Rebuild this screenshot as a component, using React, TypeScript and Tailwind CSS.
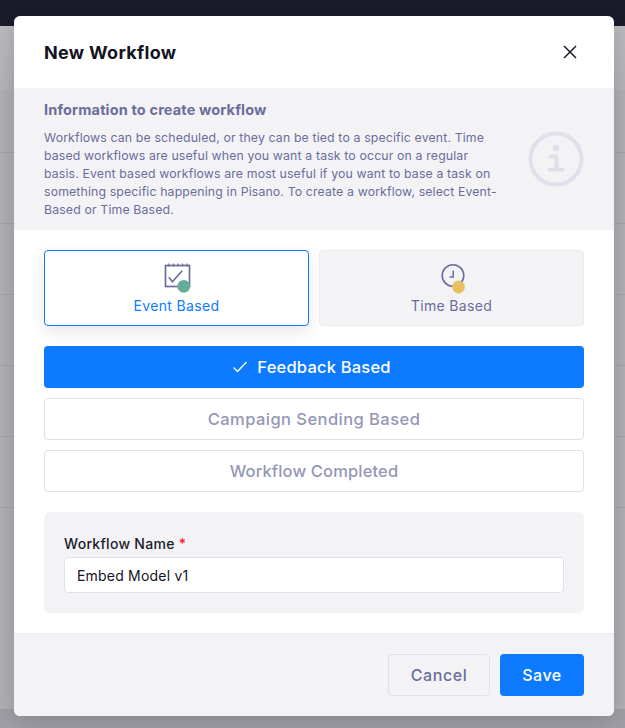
import React from "react";

const lines = [152, 223, 294, 365, 436];

function Choice({ label, cls }: { label: string; cls: string }) {
  return (
    <div className={`h-[42px] rounded-[4px] flex items-center justify-center text-[16.5px] font-medium ${cls}`}>{label}</div>
  );
}

export default function App() {
  return (
    <div className="relative w-[625px] h-[728px] overflow-hidden bg-[#b0b0b5] [font-family:Inter,'Liberation_Sans',sans-serif]">
      <div className="h-[26px] bg-[#1a1b2b]" />
      <div className="h-[64px] bg-gradient-to-b from-[#bcbcc0] to-[#b4b4b9]" />
      <div className="h-[62px]" />
      {lines.map((l) => (
        <div key={l} className="h-[71px] border-t border-[#a3a3a9]" />
      ))}
      <div className="h-[202px] border-t border-[#a3a3a9]" />
      <div className="h-[19px] bg-[#9f9fa6]" />
      <div className="absolute left-[14px] top-[16px] w-[600px] h-[700px] bg-white rounded-[6px] shadow-[0_4px_24px_rgba(0,0,0,0.18)] overflow-hidden flex flex-col">
        <div className="h-[72px] shrink-0 flex items-center justify-between pl-[30px] pr-[36px]">
          <h2 className="text-[18px] font-bold text-[#14141f] tracking-[0.3px]">New Workflow</h2>
          <svg width="16" height="16" viewBox="0 0 16 16">
            <path d="M2 2 L14 14 M14 2 L2 14" stroke="#1a1b2b" strokeWidth="1.5" fill="none" />
          </svg>
        </div>
        <div className="h-[142px] shrink-0 bg-[#f3f3f6] pl-[30px] pr-[30px] pt-[13px] flex justify-between">
          <div className="w-[458px]">
            <div className="text-[14.5px] leading-[18px] font-bold text-[#6a6d9c] tracking-[0.15px]">Information to create workflow</div>
            <p className="mt-[10px] text-[12.3px] leading-[18px] text-[#6a6d9c] tracking-[0.14px]">
              Workflows can be scheduled, or they can be tied to a specific event. Time based workflows are useful when you want a task to occur on a regular basis. Event based workflows are most useful if you want to base a task on something specific happening in Pisano. To create a workflow, select Event-Based or Time Based.
            </p>
          </div>
          <svg width="56" height="56" viewBox="0 0 56 56" className="mt-[30px]">
            <circle cx="28" cy="28" r="25.5" stroke="#dfe0ea" strokeWidth="4" fill="none" />
            <circle cx="28" cy="17" r="3.2" fill="#dfe0ea" />
            <path d="M23 25.5h5.5v13M21.5 38.5h13" stroke="#dfe0ea" strokeWidth="4" strokeLinecap="round" strokeLinejoin="round" fill="none" />
          </svg>
        </div>
        <div className="flex-1 px-[30px] pt-[20px] flex flex-col">
          <div className="grid grid-cols-2 gap-[10px]">
            <div className="h-[76px] rounded-[4px] border border-[#0d7aff] bg-white shadow-[0_6px_16px_rgba(60,60,90,0.12)] flex flex-col items-center pt-[12px]">
              <svg width="28" height="32" viewBox="0 0 28 32">
                <rect x="2.5" y="2.5" width="24" height="21" stroke="#6a6d9c" strokeWidth="1.7" fill="none" />
                <path d="M6 0.5v3M10.5 0.5v3M15 0.5v3M19.5 0.5v3M24 0.5v3" stroke="#6a6d9c" strokeWidth="1.3" />
                <path d="M5.8 14.3l3.6 4.4 9.8-11" stroke="#6a6d9c" strokeWidth="1.7" fill="none" />
                <circle cx="20.8" cy="23.3" r="6.4" fill="#66ab97" />
              </svg>
              <span className="mt-[2px] text-[14px] leading-[18px] text-[#0d7aff] tracking-[0.35px]">Event Based</span>
            </div>
            <div className="h-[76px] rounded-[4px] border border-[#ebebef] bg-[#f3f3f6] flex flex-col items-center pt-[12px]">
              <svg width="28" height="32" viewBox="0 0 28 32">
                <circle cx="15" cy="12.5" r="10.8" stroke="#6a6d9c" strokeWidth="1.6" fill="none" />
                <path d="M15.2 7.5v6.5h-3.7" stroke="#6a6d9c" strokeWidth="1.5" fill="none" />
                <circle cx="20.5" cy="24" r="6.4" fill="#e8bf62" />
              </svg>
              <span className="mt-[2px] text-[14px] leading-[18px] text-[#6a6d9c] tracking-[0.35px]">Time Based</span>
            </div>
          </div>
          <div className="mt-[20px] flex flex-col gap-[10px]">
            <div className="h-[42px] rounded-[4px] bg-[#0d7aff] text-white flex items-center justify-center gap-[9px] pr-[5px] text-[16.5px] font-medium tracking-[0.2px]">
              <svg width="16" height="12" viewBox="0 0 16 12">
                <path d="M1.5 6.5L5.5 10.5L14.5 1" stroke="#fff" strokeWidth="1.3" fill="none" />
              </svg>
              Feedback Based
            </div>
            <Choice label="Campaign Sending Based" cls="border border-[#dfe0ea] text-[#9496b6] tracking-[0.45px]" />
            <Choice label="Workflow Completed" cls="border border-[#dfe0ea] text-[#9496b6] tracking-[0.15px]" />
          </div>
          <div className="mt-[20px] h-[101px] rounded-[6px] bg-[#f3f3f6] px-[20px] pt-[22px]">
            <label className="block text-[14px] leading-[20px] font-medium text-[#1a1b2b] tracking-[0.3px]">
              Workflow Name <span className="text-[#f01e2c]">*</span>
            </label>
            <div className="mt-[3px] h-[36px] rounded-[4px] border border-[#dfe0ea] bg-white px-[12px] flex items-center text-[14px] text-[#14141f] tracking-[0.2px]">
              Embed Model v1
            </div>
          </div>
        </div>
        <div className="h-[83px] shrink-0 bg-[#f3f3f6] border-t border-[#ebebef] px-[30px] flex items-center justify-end gap-[10px]">
          <div className="w-[102px] h-[42px] rounded-[4px] border border-[#dfe0ea] flex items-center justify-center text-[16px] font-medium text-[#6a6d9c] tracking-[0.6px]">Cancel</div>
          <div className="w-[84px] h-[42px] rounded-[4px] bg-[#0d7aff] flex items-center justify-center text-[16px] font-medium text-white tracking-[0.5px]">Save</div>
        </div>
      </div>
    </div>
  );
}
